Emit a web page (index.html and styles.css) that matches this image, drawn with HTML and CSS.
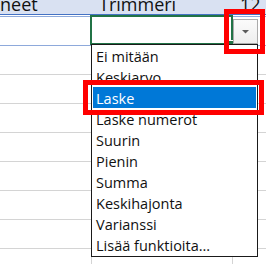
FILE: index.html
```html
<!DOCTYPE html>
<html lang="fi">
<head>
    <meta charset="UTF-8">
    <title>Suodatin</title>
    <link rel="stylesheet" href="styles.css">
</head>
<body>
    <div class="sheet">
        <div class="head">
            <div class="cell col-a">neet</div>
            <div class="cell col-b">Trimmeri</div>
            <div class="cell col-c">12</div>
        </div>
        <div class="row first"><div class="cell col-a"></div><div class="cell col-b"></div><div class="cell col-c"></div></div>
        <div class="row"><div class="cell col-a"></div><div class="cell col-b"></div><div class="cell col-c"></div></div>
        <div class="row"><div class="cell col-a"></div><div class="cell col-b"></div><div class="cell col-c"></div></div>
        <div class="row"><div class="cell col-a"></div><div class="cell col-b"></div><div class="cell col-c"></div></div>
        <div class="row"><div class="cell col-a"></div><div class="cell col-b"></div><div class="cell col-c"></div></div>
        <div class="row"><div class="cell col-a"></div><div class="cell col-b"></div><div class="cell col-c"></div></div>
        <div class="row"><div class="cell col-a"></div><div class="cell col-b"></div><div class="cell col-c"></div></div>
        <div class="row"><div class="cell col-a"></div><div class="cell col-b"></div><div class="cell col-c"></div></div>
        <div class="row"><div class="cell col-a"></div><div class="cell col-b"></div><div class="cell col-c"></div></div>

        <!-- valittu solu + pudotusvalikko -->
        <div class="active-cell"><span class="fill-handle"></span></div>
        <button class="drop-btn" type="button">
            <svg width="8" height="4" viewBox="0 0 8 4"><polygon points="0,0 7,0 3.5,3.5" fill="#5b5b5b"/></svg>
        </button>
        <ul class="drop-list">
            <li>Ei mitään</li>
            <li>Keskiarvo</li>
            <li class="selected">Laske</li>
            <li>Laske numerot</li>
            <li>Suurin</li>
            <li>Pienin</li>
            <li>Summa</li>
            <li>Keskihajonta</li>
            <li>Varianssi</li>
            <li>Lisää funktioita...</li>
        </ul>

        <!-- korostukset -->
        <div class="mark mark-btn"></div>
        <div class="mark mark-item"></div>
    </div>
</body>
</html>
```

FILE: styles.css
```css
body {
    margin: 0;
    background: #fff;
    font-family: "Open Sans", "Noto Sans", sans-serif;
    color: #111;
}
.sheet {
    position: relative;
    width: 266px;
    height: 264px;
    overflow: hidden;
}
.head,
.row {
    display: grid;
    grid-template-columns: 92px 141px 1fr;
}
.head {
    height: 14px;
    background: #d9e1f2;
    border-bottom: 1px solid #4472c4;
    overflow: hidden;
}
.head .cell {
    font-size: 18px;
    line-height: 8px;
    white-space: nowrap;
    padding-left: 7px;
}
.head .col-a {
    padding-left: 0;
}
.row {
    height: 28px;
    border-bottom: 1px solid #d4d4d4;
}
.row.first {
    margin-top: 1px;
    border-top: 1px solid #8ea9db;
    border-bottom-color: #8ea9db;
}
.row .col-a,
.row .col-b {
    border-right: 1px solid #d4d4d4;
}
.row.first .col-a,
.row.first .col-b {
    border-right: none;
}
.active-cell {
    position: absolute;
    left: 90px;
    top: 15px;
    width: 143px;
    height: 30px;
    box-sizing: border-box;
    border: 2px solid #217346;
}
.fill-handle {
    position: absolute;
    right: -4px;
    bottom: -4px;
    width: 5px;
    height: 5px;
    background: #217346;
    border: 1px solid #fff;
}
.drop-btn {
    position: absolute;
    left: 233px;
    top: 19px;
    width: 25px;
    height: 25px;
    margin: 0;
    padding: 0;
    box-sizing: border-box;
    border: 1px solid #ababab;
    background: linear-gradient(#fbfbfb, #eeeeee);
    display: flex;
    align-items: center;
    justify-content: center;
}
.drop-list {
    position: absolute;
    left: 91px;
    top: 44px;
    width: 167px;
    box-sizing: border-box;
    margin: 0;
    padding: 0 1px 1px;
    list-style: none;
    background: #fff;
    border: 1px solid #1a1a1a;
}
.drop-list li {
    height: 21px;
    line-height: 23px;
    padding-left: 3px;
    font-size: 14.5px;
    white-space: nowrap;
}
.drop-list li.selected {
    background: #0078d7;
    color: #fff;
}
.mark {
    position: absolute;
    box-sizing: border-box;
    border: 5px solid #ff0000;
}
.mark-btn {
    left: 224px;
    top: 9px;
    width: 41px;
    height: 45px;
}
.mark-item {
    left: 83px;
    top: 80px;
    width: 181px;
    height: 35px;
}
```
